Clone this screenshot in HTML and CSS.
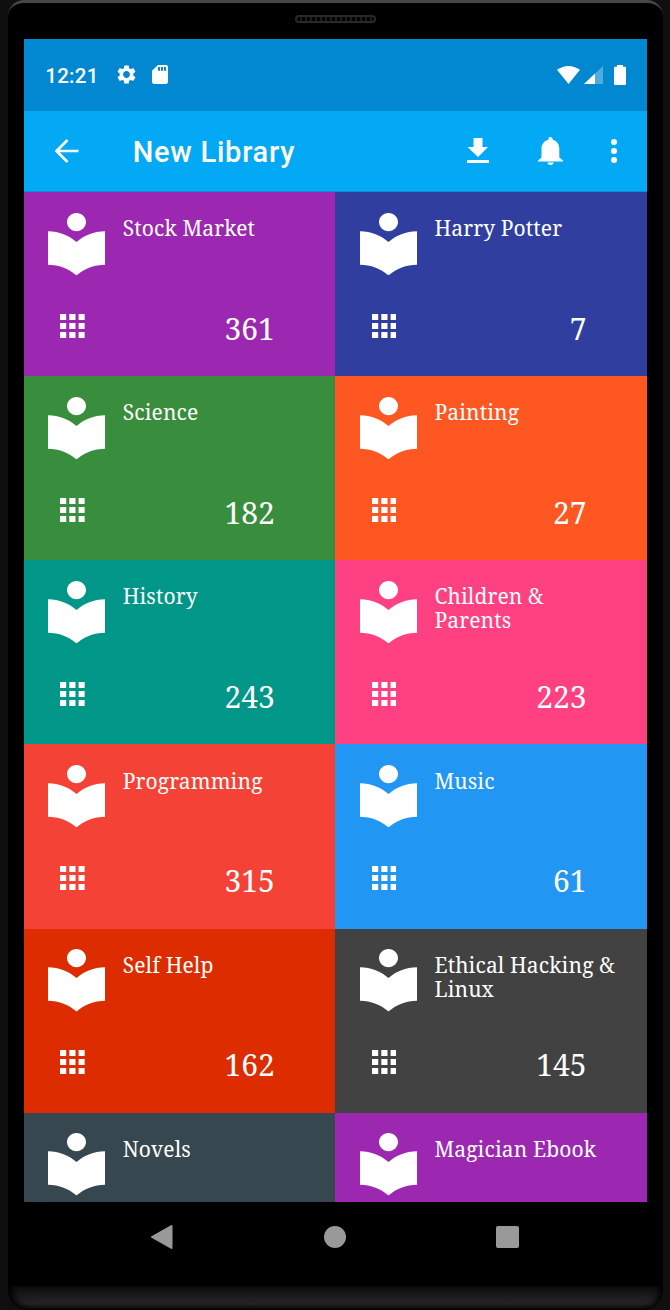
FILE: index.html
```html
<!DOCTYPE html>
<html lang="en">
<head>
<meta charset="utf-8">
<title>New Library</title>
<link rel="stylesheet" href="styles.css">
</head>
<body>
<svg class="defs" width="0" height="0">
  <symbol id="reader" viewBox="3 2 18 20.55" preserveAspectRatio="none"><path d="M12 11.55C9.64 9.35 6.48 8 3 8v11c3.48 0 6.64 1.35 9 3.55 2.36-2.19 5.52-3.55 9-3.55V8c-3.48 0-6.64 1.35-9 3.55zM12 8c1.66 0 3-1.34 3-3s-1.34-3-3-3-3 1.34-3 3 1.34 3 3 3z"/></symbol>
  <symbol id="apps" viewBox="4 4 16 16" preserveAspectRatio="none"><path d="M4 8h4V4H4v4zm6 12h4v-4h-4v4zm-6 0h4v-4H4v4zm0-6h4v-4H4v4zm6 0h4v-4h-4v4zm6-10v4h4V4h-4zm-6 4h4V4h-4v4zm6 6h4v-4h-4v4zm0 6h4v-4h-4v4z"/></symbol>
</svg>
<div class="phone">
  <div class="bezel"><div class="speaker"></div></div>
  <div class="screen">
    <div class="status">
      <span class="time">12:21</span>
      <svg class="gear" viewBox="2 2 20 20"><path d="M19.14 12.94c.04-.3.06-.61.06-.94 0-.32-.02-.64-.07-.94l2.03-1.58c.18-.14.23-.41.12-.61l-1.92-3.32c-.12-.22-.37-.29-.59-.22l-2.39.96c-.5-.38-1.03-.7-1.62-.94l-.36-2.54c-.04-.24-.24-.41-.48-.41h-3.84c-.24 0-.43.17-.47.41l-.36 2.54c-.59.24-1.13.57-1.62.94l-2.39-.96c-.22-.08-.47 0-.59.22L2.74 8.87c-.12.21-.08.47.12.61l2.03 1.58c-.05.3-.09.63-.09.94s.02.64.07.94l-2.03 1.58c-.18.14-.23.41-.12.61l1.92 3.32c.12.22.37.29.59.22l2.39-.96c.5.38 1.03.7 1.62.94l.36 2.54c.05.24.24.41.48.41h3.84c.24 0 .44-.17.47-.41l.36-2.54c.59-.24 1.13-.56 1.62-.94l2.39.96c.22.08.47 0 .59-.22l1.92-3.32c.12-.22.07-.47-.12-.61l-2.01-1.58zM12 15.6c-1.98 0-3.6-1.62-3.6-3.6s1.62-3.6 3.6-3.6 3.6 1.62 3.6 3.6-1.62 3.6-3.6 3.6z"/></svg>
      <svg class="sd" viewBox="4 2 16 20" preserveAspectRatio="none"><path d="M18 2h-8L4.02 8 4 20c0 1.100.9 2 2 2h12c1.100 0 2-.9 2-2V4c0-1.100-.9-2-2-2zm-6 6h-2V4h2v4zm3 0h-2V4h2v4zm3 0h-2V4h2v4z"/></svg>
      <svg class="wifi" viewBox="0 0 23 18" preserveAspectRatio="none"><path d="M0 3.800Q11.500-3.800 23 3.800L11.500 18z"/></svg>
      <svg class="signal" viewBox="0 0 19 18"><path opacity=".3" d="M19 0v18H0z"/><path d="M11 7.600V18H0z"/></svg>
      <svg class="battery" viewBox="0 0 12 20" preserveAspectRatio="none"><path d="M3 0h6v1.800h2q1 0 1 1V19q0 1-1 1H1q-1 0-1-1V2.800q0-1 1-1h2z"/></svg>
    </div>
    <div class="toolbar">
      <svg class="back" viewBox="0 0 24 24"><path d="M24 12H2M13 1L2 12l11 11" fill="none" stroke="#fff" stroke-width="2.600"/></svg>
      <h1 class="heading">New Library</h1>
      <svg class="download" viewBox="0 0 22 25"><path d="M6.500 0h9v9H21L11 19 .500 9h6zM0 22h22v3H0z"/></svg>
      <svg class="bell" viewBox="0 0 25 28"><path d="M9.500 25.500h6c0 1.500-1.200 2.500-3 2.500s-3-1-3-2.500zM12.500 0c1.200 0 2.100.9 2.100 2.100v.7c4.200 1 6.700 4.500 6.700 9V20.500l3.700 3v1H0v-1l3.500-3v-8.700c0-4.500 2.600-8 6.900-9v-.7C10.400.9 11.300 0 12.500 0z"/></svg>
      <svg class="more" viewBox="0 0 6 24"><circle cx="3" cy="3" r="3"/><circle cx="3" cy="12" r="3"/><circle cx="3" cy="21" r="3"/></svg>
    </div>
    <div class="tiles">
      <div class="tile purple"><svg class="reader"><use href="#reader"/></svg><div class="name">Stock Market</div><svg class="apps"><use href="#apps"/></svg><div class="count">361</div></div>
      <div class="tile indigo"><svg class="reader"><use href="#reader"/></svg><div class="name">Harry Potter</div><svg class="apps"><use href="#apps"/></svg><div class="count">7</div></div>
      <div class="tile green"><svg class="reader"><use href="#reader"/></svg><div class="name">Science</div><svg class="apps"><use href="#apps"/></svg><div class="count">182</div></div>
      <div class="tile orange"><svg class="reader"><use href="#reader"/></svg><div class="name">Painting</div><svg class="apps"><use href="#apps"/></svg><div class="count">27</div></div>
      <div class="tile teal"><svg class="reader"><use href="#reader"/></svg><div class="name">History</div><svg class="apps"><use href="#apps"/></svg><div class="count">243</div></div>
      <div class="tile pink"><svg class="reader"><use href="#reader"/></svg><div class="name">Children &amp;<br>Parents</div><svg class="apps"><use href="#apps"/></svg><div class="count">223</div></div>
      <div class="tile red"><svg class="reader"><use href="#reader"/></svg><div class="name">Programming</div><svg class="apps"><use href="#apps"/></svg><div class="count">315</div></div>
      <div class="tile blue"><svg class="reader"><use href="#reader"/></svg><div class="name">Music</div><svg class="apps"><use href="#apps"/></svg><div class="count">61</div></div>
      <div class="tile rust"><svg class="reader"><use href="#reader"/></svg><div class="name">Self Help</div><svg class="apps"><use href="#apps"/></svg><div class="count">162</div></div>
      <div class="tile gray"><svg class="reader"><use href="#reader"/></svg><div class="name">Ethical Hacking &amp;<br>Linux</div><svg class="apps"><use href="#apps"/></svg><div class="count">145</div></div>
      <div class="tile slate"><svg class="reader"><use href="#reader"/></svg><div class="name">Novels</div></div>
      <div class="tile purple"><svg class="reader"><use href="#reader"/></svg><div class="name">Magician Ebook</div></div>
    </div>
  </div>
  <div class="nav">
    <svg class="nav-back" viewBox="0 0 22 24"><path d="M20.500 1v22L1 12z" fill="#999" stroke="#999" stroke-width="2" stroke-linejoin="round"/></svg>
    <div class="nav-home"></div>
    <div class="nav-recent"></div>
  </div>
  <div class="chin"></div>
</div>
</body>
</html>
```
FILE: styles.css
```css
* { box-sizing: border-box; }
body { margin: 0; height: 1310px; overflow: hidden; background: #0f0f0f; padding: 0 7px 0 8px; }
svg { display: block; fill: #fff; flex: none; }
.defs { position: absolute; }
.phone { height: 1310px; background: #000; border-top: 3px solid #474747; border-radius: 16px 16px 20px 20px; padding: 0; overflow: hidden; }
.bezel { height: 36px; padding-top: 12px; }
.speaker { width: 81px; height: 8px; margin-left: 287px; border: 2px solid #292929; border-radius: 4px; background: repeating-linear-gradient(90deg, #000 0 3px, #1c1c1c 3px 5px); }
.screen { width: 623.500px; height: 1162.500px; margin-left: 15.700px; overflow: hidden; display: flex; flex-direction: column; }
.status { height: 71.500px; flex: none; background: #0288d1; display: flex; align-items: center; padding-left: 21.500px; color: #fff; }
.time { font: 500 20.500px/24px Roboto, sans-serif; letter-spacing: .3px; width: 71.500px; padding-top: 2px; }
.gear { width: 19px; height: 19px; }
.sd { width: 16px; height: 19px; margin-left: 16px; }
.wifi { width: 23px; height: 18px; margin-left: 389px; }
.signal { width: 19px; height: 18px; margin-left: 4px; }
.battery { width: 12px; height: 20px; margin-left: 11px; }
.toolbar { height: 81.500px; flex: none; background: #03a9f4; display: flex; align-items: center; padding-left: 30px; border-bottom: 1px solid #078fd2; color: #fff; }
.back { width: 25px; height: 24px; }
.heading { margin: 0 0 0 54px; font: 500 29px/36px Roboto, sans-serif; letter-spacing: .75px; width: 334px; padding-top: 3px; }
.download { width: 22px; height: 25px; }
.bell { width: 25px; height: 28px; margin-left: 49px; }
.more { width: 6px; height: 24px; margin-left: 48px; }
.tiles { display: grid; grid-template-columns: 1fr 1fr; grid-auto-rows: 184.150px; flex: none; }
.tile { display: grid; grid-template: 101px 1fr / 74.500px 152px; align-content: start; padding: 20.500px 0 0 24.500px; color: #fff; font-family: "Noto Serif", "DejaVu Serif Condensed", "DejaVu Serif", serif; }
.reader { width: 57px; height: 62.500px; }
.name { font-size: 21px; line-height: 23.900px; letter-spacing: .12px; padding-top: 4.700px; white-space: nowrap; }
.apps { width: 24.800px; height: 24px; margin-left: 11.700px; }
.count { font-size: 30px; line-height: 30px; text-align: right; }
.purple { background: #9c27b0; }
.indigo { background: #303f9f; }
.green { background: #388e3c; }
.orange { background: #ff5722; }
.teal { background: #009688; }
.pink { background: #ff4081; }
.red { background: #f44336; }
.blue { background: #2196f3; }
.rust { background: #dd2c00; }
.gray { background: #424242; }
.slate { background: #37474f; }
.nav { height: 84.500px; display: flex; padding-left: 142.500px; }
.nav-back { width: 22px; height: 24px; margin-top: 23.500px; }
.nav-home { width: 22px; height: 22px; border-radius: 50%; background: #999; margin: 24px 0 0 151.500px; }
.nav-recent { width: 23px; height: 22px; border-radius: 2px; background: #999; margin: 24px 0 0 150px; }
.chin { height: 23px; border-radius: 0 0 18px 18px; background: linear-gradient(#0e0e0e, #262626 80%, #1c1c1c); box-shadow: inset 6px -2px 7px -2px #000, inset -6px 0 7px -2px #000; }
```
